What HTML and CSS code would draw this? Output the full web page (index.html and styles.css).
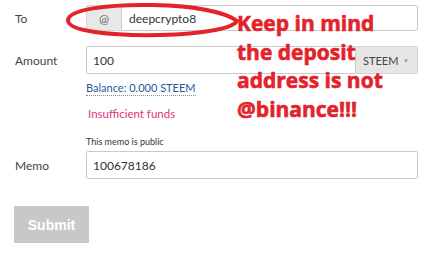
FILE: index.html
```html
<!DOCTYPE html>
<html lang="en">
<head>
  <meta charset="UTF-8">
  <title>Transfer</title>
  <link rel="stylesheet" href="styles.css">
</head>
<body>
  <form class="transfer">
    <!-- To -->
    <div class="row">
      <label>To</label>
      <div class="input-group">
        <span class="addon">@</span>
        <input class="field" type="text" value="deepcrypto8">
      </div>
    </div>

    <!-- Amount -->
    <div class="row row-amount">
      <label>Amount</label>
      <div class="input-group">
        <input class="field field-amount" type="text" value="100">
        <span class="asset">STEEM <span class="caret">&#9660;</span></span>
      </div>
    </div>
    <div class="help">
      <a class="balance">Balance: 0.000 STEEM</a>
      <div class="error">Insufficient funds</div>
      <div class="hint">This memo is public</div>
    </div>

    <!-- Memo -->
    <div class="row row-memo">
      <label>Memo</label>
      <input class="field field-memo" type="text" value="100678186">
    </div>

    <button class="submit" type="button" disabled>Submit</button>
  </form>

  <!-- annotation drawn on top of the screenshot -->
  <svg class="circle" width="180" height="40" viewBox="0 0 180 40">
    <path d="M88 4 C40 3 4 9 3 19 C2 30 45 35 95 34 C140 33 168 27 172 20 C160 11 130 5 88 4 Z" fill="none" stroke="#e3232c" stroke-width="4"/>
  </svg>
  <div class="note">Keep in mind<br>the deposit<br>address is not<br>@binance!!!</div>
</body>
</html>
```

FILE: styles.css
```css
* {
  margin: 0;
  padding: 0;
  box-sizing: border-box;
}

body {
  background-color: #fff;
  font-family: Lato, "Open Sans", sans-serif;
  font-size: 12px;
  color: #333;
  position: relative;
  width: 436px;
  height: 261px;
  overflow: hidden;
}

.transfer {
  padding: 5px 18px 0 15px;
}

/* Rows */
.row {
  display: grid;
  grid-template-columns: 71px 332px;
  align-items: center;
}
.row label {
  color: #444;
}
.row-amount {
  margin-top: 15px;
}
.row-memo {
  margin-top: 3px;
}

.input-group {
  display: flex;
}
.field {
  flex: 1;
  height: 26px;
  border: 1px solid #cacaca;
  border-radius: 2px;
  padding: 0 7px;
  font: inherit;
  color: #333;
  background: #fff;
  outline: none;
}
.input-group .addon + .field {
  border-radius: 0 2px 2px 0;
}
.addon {
  width: 35px;
  height: 26px;
  display: flex;
  align-items: center;
  justify-content: center;
  background-color: #e8e8e8;
  border: 1px solid #d6d6d6;
  border-right: none;
  border-radius: 2px 0 0 2px;
  color: #666;
}
.field-amount {
  height: 28px;
  padding-left: 6px;
}
.asset {
  width: 62px;
  height: 28px;
  display: flex;
  align-items: center;
  justify-content: space-between;
  padding: 0 8px 0 7px;
  background-color: #e6e6e6;
  border: 1px solid #d2d2d2;
  border-left: none;
  border-radius: 0 2px 2px 0;
  font-size: 11px;
  color: #444;
}
.caret {
  font-size: 6px;
  color: #999;
}
.field-memo {
  height: 28px;
  padding-left: 6px;
}

/* Help texts under amount */
.help {
  margin-left: 71px;
  padding-top: 6px;
}
.balance {
  display: inline-block;
  color: #1d5a96;
  font-size: 11px;
  line-height: 15px;
  border-bottom: 1px dotted #8a8a8a;
}
.error {
  margin-top: 10px;
  color: #e0337a;
  font-size: 11.5px;
  line-height: 16px;
  padding-left: 2px;
}
.hint {
  margin-top: 14px;
  font-size: 9px;
  line-height: 12px;
  color: #333;
}

/* Submit */
.submit {
  display: block;
  margin: 27px 0 0 -1px;
  width: 75px;
  height: 37px;
  border: none;
  background-color: #c8c8c8;
  color: #fff;
  font-family: "Liberation Sans", Arial, sans-serif;
  font-weight: bold;
  font-size: 14px;
}

/* Annotation */
.circle {
  position: absolute;
  left: 65px;
  top: 1px;
}
.note {
  position: absolute;
  left: 237px;
  top: 9px;
  font-family: "Open Sans", sans-serif;
  font-weight: bold;
  font-size: 21px;
  line-height: 28.5px;
  color: #e3232c;
  -webkit-text-stroke: 0.6px #e3232c;
}
```
